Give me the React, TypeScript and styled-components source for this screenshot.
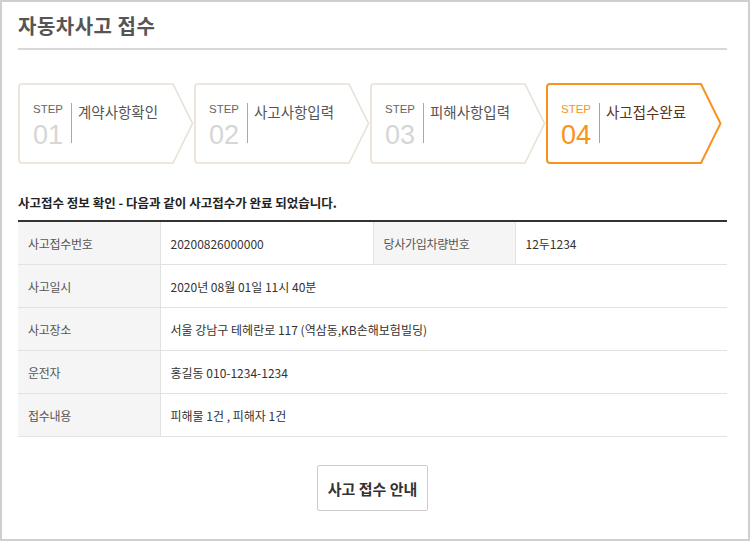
import { FC } from 'react';
import styled, { createGlobalStyle } from 'styled-components';

const GlobalStyle = createGlobalStyle`
  html, body {
    margin: 0;
    padding: 0;
    background: #ffffff;
  }
  body {
    font-family: "Noto Sans CJK KR", "Noto Sans", sans-serif;
    color: #333333;
  }
`;

const STEPS = [
  { no: '01', label: '계약사항확인' },
  { no: '02', label: '사고사항입력' },
  { no: '03', label: '피해사항입력' },
  { no: '04', label: '사고접수완료' },
];

const ACTIVE_STEP = 3;

const INFO_ROWS: { label: string; value: string; label2?: string; value2?: string }[] = [
  { label: '사고접수번호', value: '20200826000000', label2: '당사가입차량번호', value2: '12두1234' },
  { label: '사고일시', value: '2020년 08월 01일 11시 40분' },
  { label: '사고장소', value: '서울 강남구 테헤란로 117 (역삼동,KB손해보험빌딩)' },
  { label: '운전자', value: '홍길동 010-1234-1234' },
  { label: '접수내용', value: '피해물 1건 , 피해자 1건' },
];

const StepShape: FC<{ active: boolean }> = ({ active }) => (
  <ShapeSvg viewBox="0 0 176 81" preserveAspectRatio="none">
    <path
      d="M4 1 H155 L174.5 40.5 L155 80 H4 Q1 80 1 77 V4 Q1 1 4 1 Z"
      fill="#fff"
      stroke={active ? '#f7931e' : '#e8e0d6'}
      strokeWidth={active ? 2 : 1.6}
      strokeLinejoin="miter"
    />
  </ShapeSvg>
);

export default function App() {
  return (
    <>
      <GlobalStyle />
      <Page>
        <Header>
          <Title>자동차사고 접수</Title>
        </Header>

        <StepList>
          {STEPS.map((s, i) => {
            const active = i === ACTIVE_STEP;
            return (
              <Step key={s.no}>
                <StepShape active={active} />
                <StepNum>
                  <StepWord $active={active}>STEP</StepWord>
                  <StepDigits $active={active}>{s.no}</StepDigits>
                </StepNum>
                <StepLabel $active={active}>{s.label}</StepLabel>
              </Step>
            );
          })}
        </StepList>

        <InfoTitle>사고접수 정보 확인 - 다음과 같이 사고접수가 완료 되었습니다.</InfoTitle>

        <InfoTable>
          <colgroup>
            <col style={{ width: 142 }} />
            <col style={{ width: 213 }} />
            <col style={{ width: 142 }} />
            <col />
          </colgroup>
          <tbody>
            {INFO_ROWS.map((r) => (
              <tr key={r.label}>
                <Th>{r.label}</Th>
                {r.label2 ? (
                  <>
                    <Td>{r.value}</Td>
                    <Th>{r.label2}</Th>
                    <Td>{r.value2}</Td>
                  </>
                ) : (
                  <Td colSpan={3}>{r.value}</Td>
                )}
              </tr>
            ))}
          </tbody>
        </InfoTable>

        <ButtonRow>
          <GuideButton type="button">사고 접수 안내</GuideButton>
        </ButtonRow>
      </Page>
    </>
  );
}

const Page = styled.div`
  width: 750px;
  height: 541px;
  box-sizing: border-box;
  border: 2px solid #cfcfcf;
  padding: 0 21px 0 16px;
  display: flex;
  flex-direction: column;
  overflow: hidden;
`;

const Header = styled.div`
  height: 46px;
  display: flex;
  align-items: center;
  border-bottom: 2px solid #dcd7d2;
`;

const Title = styled.h1`
  margin: 0;
  font-size: 20px;
  font-weight: 700;
  color: #555555;
  letter-spacing: 0.5px;
`;

const StepList = styled.div`
  display: flex;
  margin-top: 33px;
`;

const Step = styled.div`
  position: relative;
  width: 176px;
  height: 81px;
  flex-shrink: 0;
  display: flex;
  align-items: flex-start;
  box-sizing: border-box;
  padding: 19px 0 0 15px;
`;

const ShapeSvg = styled.svg`
  position: absolute;
  inset: 0;
  width: 176px;
  height: 81px;
  z-index: 0;
`;

const StepNum = styled.div`
  position: relative;
  width: 38px;
  height: 47px;
  display: flex;
  flex-direction: column;
  font-family: "Liberation Sans", Arial, sans-serif;
`;

const StepWord = styled.span<{ $active: boolean }>`
  font-size: 11.5px;
  line-height: 14px;
  color: ${(p) => (p.$active ? '#f7931e' : '#666666')};
`;

const StepDigits = styled.span<{ $active: boolean }>`
  font-size: 27px;
  line-height: 28px;
  margin-top: 5px;
  color: ${(p) => (p.$active ? '#f7931e' : '#d6d6d6')};
`;

const StepLabel = styled.div<{ $active: boolean }>`
  position: relative;
  height: 40px;
  margin-top: 1px;
  box-sizing: border-box;
  border-left: 1px solid ${(p) => (p.$active ? '#f7931e' : '#a8a8a8')};
  padding-left: 6px;
  font-size: 14.5px;
  line-height: 18px;
  color: ${(p) => (p.$active ? '#5c3317' : '#555555')};
`;

const InfoTitle = styled.div`
  margin-top: 31px;
  font-size: 12.5px;
  line-height: 16px;
  font-weight: 700;
  color: #222222;
`;

const InfoTable = styled.table`
  margin-top: 9px;
  width: 100%;
  border-collapse: collapse;
  table-layout: fixed;
  border-top: 2px solid #333333;
`;

const Th = styled.th`
  height: 42px;
  padding: 0 0 0 10px;
  text-align: left;
  font-weight: 400;
  font-size: 12px;
  letter-spacing: -0.3px;
  color: #555555;
  background: #f5f5f5;
  border-bottom: 1px solid #e2e2e2;
  border-right: 1px solid #e2e2e2;
  border-left: 1px solid #e2e2e2;

  &:first-child {
    border-left: none;
  }
`;

const Td = styled.td`
  height: 42px;
  padding: 0 0 0 10px;
  font-size: 12px;
  color: #333333;
  border-bottom: 1px solid #e2e2e2;
`;

const ButtonRow = styled.div`
  display: flex;
  justify-content: center;
  margin-top: 28px;
`;

const GuideButton = styled.button`
  width: 111px;
  height: 46px;
  background: #ffffff;
  border: 1px solid #cccccc;
  border-radius: 2px;
  font-family: "Noto Sans CJK KR", sans-serif;
  font-size: 15px;
  font-weight: 700;
  color: #333333;
  cursor: pointer;
  padding: 0;
`;
